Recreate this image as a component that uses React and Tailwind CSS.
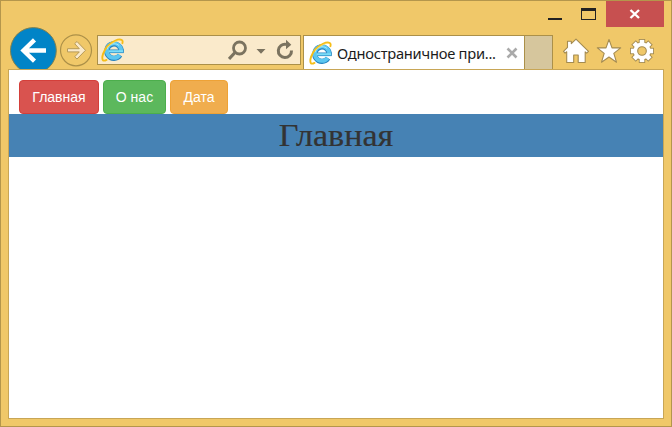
function IELogo() {
  return (
    <svg width="24" height="24" viewBox="0 0 24 24" className="block shrink-0">
      <g fill="none">
        <path d="M20.100 14.200A7.200 7.200 0 1 0 19 17.100" stroke="#2482c0" strokeWidth="5.200" />
        <path d="M7.500 13.300h15.200" stroke="#2482c0" strokeWidth="3.600" />
        <path d="M20.100 13.500A7.200 7.200 0 1 0 18.700 17" stroke="#5cc6f0" strokeWidth="3.800" />
        <path d="M7.500 13.300h14.700" stroke="#7bdcf8" strokeWidth="2.200" />
        <path d="M6 11.500c.8-3.400 3.500-5.800 7.100-5.800 2 0 3.700.7 5 1.900" stroke="#a0ebff" strokeWidth="1" />
      </g>
      <path
        d="M21.400 5.200c.5-1.900.2-3-.9-3.400C17.500.8 10.800 3.200 6.300 8.300 2.400 12.800.400 19.500 1.800 21.900c.6 1 2 .9 3.700 0"
        fill="none"
        stroke="#f6bd17"
        strokeWidth="1.900"
        strokeLinecap="round"
      />
      <path d="M18.500 2.300C14.500 2.900 9 6.200 6 9.800" fill="none" stroke="#ffe477" strokeWidth="0.7" />
    </svg>
  );
}

function WindowControls() {
  return (
    <div className="flex h-[26px] justify-end pr-[7px]">
      <svg width="60" height="26" viewBox="0 0 60 26" className="block">
        <rect x="2" y="17" width="14" height="2" fill="#222" />
        <path d="M35 7h15v12H35zM36 10v8h13v-8z" fill="#222" fillRule="evenodd" />
      </svg>
      <div className="flex w-[58px] items-center justify-center bg-[#c75050]">
        <svg width="12" height="10" viewBox="0 0 12 10" className="-ml-[1px] block">
          <path d="M1.500 1l8.500 8M10 1l-8.500 8" stroke="#fff" strokeWidth="2.400" />
        </svg>
      </div>
    </div>
  );
}

function AddressBar() {
  return (
    <div className="ml-[4px] mt-[8px] flex h-[30px] w-[204px] items-center border border-[#ab9049] bg-[#faeacb] pl-[3px]">
      <IELogo />
      <svg width="70" height="28" viewBox="228 36 70 28" className="ml-[103px] block shrink-0">
        <g fill="none" stroke="#7b735f">
          <circle cx="239.500" cy="48" r="6" strokeWidth="2.800" />
          <path d="M235 52.500l-6 6.500" strokeWidth="3.200" />
          <path d="M291.500 50.500a6.600 6.600 0 1 1-5.500-6.100" strokeWidth="3" />
        </g>
        <path d="M256.500 49h9l-4.500 4.700zM286 39.700l5.300 5-5.300 4.500z" fill="#7b735f" />
      </svg>
    </div>
  );
}

function GearShape({ extra, color }) {
  return (
    <g fill={color}>
      <circle cx="642" cy="51" r={8.500 + extra} />
      {[0, 45, 90, 135].map((angle) => (
        <rect
          key={angle}
          x={639.700 - extra}
          y={39.900 - extra}
          width={4.600 + extra * 2}
          height={22.200 + extra * 2}
          transform={`rotate(${angle} 642 51)`}
        />
      ))}
    </g>
  );
}

function Toolbar() {
  return (
    <svg width="94" height="28" viewBox="562 37 94 28" className="ml-[9px] mt-[10px] block">
      <g fill="#fff" stroke="#a48b50" strokeWidth="1.100" strokeLinejoin="round">
        <path d="M563.500 51.300l4-4v-6h3.800v2.300l4.700-4.400 12.500 12.100-1.800 1.900-1.500-1.400v10.700h-7v-7.500h-4.500v7.500h-7V51.700l-1.600 1.400z" />
        <path d="M609 39.500l3 8.400h8.700l-6.900 5.500 2.700 8.800-7.500-5.200-7.500 5.200 2.700-8.800-6.900-5.500h8.700z" />
      </g>
      <GearShape extra={0.900} color="#a48b50" />
      <GearShape extra={0} color="#fff" />
      <circle cx="642" cy="51" r="4.300" fill="#f0c869" stroke="#a48b50" strokeWidth="1.100" />
    </svg>
  );
}

function NavigationRow() {
  return (
    <div className="flex h-[42px] items-start overflow-hidden pl-[9px]">
      <svg width="47" height="47" viewBox="0 0 47 47" className="block shrink-0">
        <circle cx="23.400" cy="23.500" r="22.900" fill="#0184c7" stroke="#80804f" strokeWidth="1" />
        <path d="M36 23.500H14M24.500 12.800L13.500 23.500l11 10.700" fill="none" stroke="#fff" strokeWidth="4.400" />
      </svg>
      <svg width="34" height="34" viewBox="0 0 34 34" className="ml-[2px] mt-[6px] block shrink-0">
        <circle cx="17" cy="17.300" r="15.500" fill="none" stroke="#ac9048" strokeWidth="1.200" />
        <path
          d="M8.500 15.700h11.800l-4.600-5 2.300-2.200 8.500 8.800-8.500 8.700-2.300-2.200 4.600-4.900H8.500z"
          fill="#faeacb"
          stroke="#b69a58"
          strokeWidth="1"
        />
      </svg>
      <AddressBar />
      <div className="ml-[2px] mt-[8px] flex h-[34px] w-[222px] shrink-0 items-center border border-b-0 border-[#ab9049] bg-white pl-[5px] font-['Noto_Sans',sans-serif]">
        <IELogo />
        <span className="ml-[4px] mt-[2px] w-[160px] whitespace-nowrap text-[14.700px] tracking-[-0.250px] text-[#1c1c1c]">
          Одностраничное при...
        </span>
        <svg width="12" height="12" viewBox="0 0 12 12" className="ml-[9px] block shrink-0">
          <path d="M1.500 1.500l9 9M10.500 1.500l-9 9" stroke="#aaa" strokeWidth="2.600" />
        </svg>
      </div>
      <div className="-ml-px mt-[8px] h-[34px] w-[29px] shrink-0 border border-b-0 border-[#ab9049] bg-[#d6c69d]" />
      <Toolbar />
    </div>
  );
}

export default function App() {
  return (
    <div className="h-[427px] w-[672px] overflow-hidden border border-[#b4964c] bg-[#f0c869]">
      <WindowControls />
      <NavigationRow />
      <main className="mx-[7px] h-[350px] border border-[#c8a656] bg-white">
        <nav className="flex h-[44px] gap-[4px] px-[10px] pt-[10px] font-['Liberation_Sans',sans-serif] text-[14px] leading-5 text-white">
          <button className="h-[34px] w-[80px] rounded-[4px] border border-[#d43f3a] bg-[#d9534f]">Главная</button>
          <button className="h-[34px] w-[63px] rounded-[4px] border border-[#4cae4c] bg-[#5cb85c]">О нас</button>
          <button className="h-[34px] w-[58px] rounded-[4px] border border-[#eea236] bg-[#f0ad4e]">Дата</button>
        </nav>
        <h1 className="h-[43px] bg-[#4682b4] text-center font-['Liberation_Serif',serif] text-[31px] leading-[43px] text-[#333]">
          <span className="inline-block scale-x-[1.1] [-webkit-text-stroke:0.2px_#333]">Главная</span>
        </h1>
      </main>
    </div>
  );
}
